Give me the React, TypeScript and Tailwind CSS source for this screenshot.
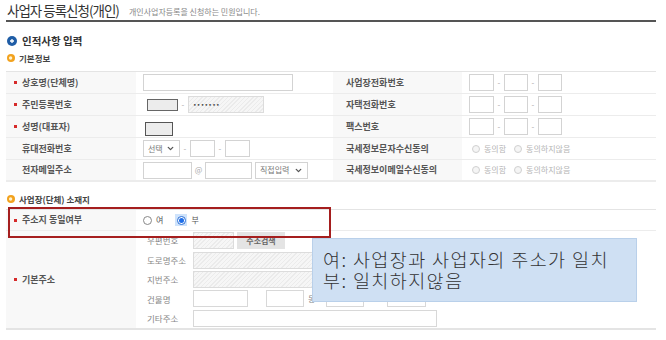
import { ReactNode } from 'react'
import { ChevronDown } from 'lucide-react'

const hatch =
  'bg-[repeating-linear-gradient(135deg,#ebebeb_0px,#ebebeb_1px,#f6f6f6_1px,#f6f6f6_3px)]'

function Lbl({ req, children }: { req?: boolean; children: ReactNode }) {
  return (
    <div className="flex h-full items-center pl-[8px] text-[9px] font-bold text-[#555]">
      <span className={req ? 'mr-[5px] h-[3px] w-[3px] bg-[#d62a2a]' : 'mr-[5px] w-[3px]'} />
      {children}
    </div>
  )
}

function Lbl2({ children }: { children: ReactNode }) {
  return <div className="flex h-full items-center pl-[13px] text-[9px] font-bold text-[#555]">{children}</div>
}

function Dash() {
  return <span className="w-[10px] text-center text-[8px] text-[#aaa]">-</span>
}

function Phone() {
  return (
    <div className="flex items-center">
      <div className="h-[17px] w-[25px] border border-[#d3d3d3] bg-white" />
      <Dash />
      <div className="h-[17px] w-[24px] border border-[#d3d3d3] bg-white" />
      <Dash />
      <div className="h-[17px] w-[24px] border border-[#d3d3d3] bg-white" />
    </div>
  )
}

function Radio({ on, dim }: { on?: boolean; dim?: boolean }) {
  if (on)
    return (
      <span className="flex h-[12px] w-[12px] items-center justify-center bg-[#cfe3fb]">
        <span className="flex h-[9px] w-[9px] items-center justify-center rounded-full border border-[#2a6fd6] bg-white">
          <span className="h-[5px] w-[5px] rounded-full bg-[#1e6ee8]" />
        </span>
      </span>
    )
  return (
    <span
      className={
        dim
          ? 'h-[8px] w-[8px] rounded-full border border-[#d0d0d0] bg-[#f5f5f5]'
          : 'h-[9px] w-[9px] rounded-full border border-[#888] bg-white'
      }
    />
  )
}

function Agree() {
  return (
    <div className="flex items-center pl-[10px] text-[8px] text-[#b5b5b5]">
      <Radio dim />
      <span className="ml-[4px]">동의함</span>
      <span className="ml-[8px]" />
      <Radio dim />
      <span className="ml-[4px]">동의하지않음</span>
    </div>
  )
}

function Select({ w, label }: { w: string; label: string }) {
  return (
    <div className={`flex h-[17px] items-center justify-between border border-[#d3d3d3] bg-white pl-[4px] pr-[4px] ${w}`}>
      <span className="text-[8px] text-[#777]">{label}</span>
      <ChevronDown size={9} strokeWidth={3.5} color="#555" />
    </div>
  )
}

function BlueIcon() {
  return (
    <svg width="10" height="10" viewBox="0 0 10 10">
      <circle cx="5" cy="5" r="5" fill="#1f5da6" />
      <path d="M3 5h4M5 3v4" stroke="#fff" strokeWidth="1.3" />
    </svg>
  )
}

function OrangeIcon() {
  return (
    <svg width="8" height="8" viewBox="0 0 8 8">
      <circle cx="4" cy="4" r="4" fill="#f2a21e" />
      <circle cx="3.6" cy="4" r="1.7" fill="#fff2cf" />
    </svg>
  )
}

function SubRow({ label, children }: { label: string; children?: ReactNode }) {
  return (
    <div className="flex h-[19.6px] items-center">
      <span className="w-[57px] pl-[11px] text-[8.5px] text-[#888]">{label}</span>
      {children}
    </div>
  )
}

export default function App() {
  return (
    <div className="relative h-[340px] w-[666px] overflow-hidden bg-white font-['Noto_Sans_CJK_KR',sans-serif]">
      <div className="ml-[6px] w-[650px]">
        <div className="flex h-[22px] items-end gap-[10px] border-b-2 border-[#555] pb-[3px] pl-[1px]">
          <span className="text-[13.5px] leading-[13px] tracking-[-1px] text-[#333]">사업자 등록신청(개인)</span>
          <span className="mb-[1px] text-[8px] leading-[8px] text-[#888]">개인사업자등록을 신청하는 민원입니다.</span>
        </div>

        <div className="mt-[13px] flex h-[12px] items-center gap-[5px] pl-[1px]">
          <BlueIcon />
          <span className="text-[10.5px] font-semibold text-[#333]">인적사항 입력</span>
        </div>
        <div className="mt-[5px] flex h-[12px] items-center gap-[4px] pl-[1px]">
          <OrangeIcon />
          <span className="text-[8.5px] font-bold text-[#444]">기본정보</span>
        </div>

        <div className="mt-[7px] border-t border-[#e4e4e4]">
          <div className="flex h-[22px] border-b border-[#ececec]">
            <div className="w-[130px] bg-[#f8f8f8]"><Lbl req>상호명(단체명)</Lbl></div>
            <div className="flex w-[197px] items-center pl-[7px]">
              <div className="h-[17px] w-[150px] border border-[#d3d3d3] bg-white" />
            </div>
            <div className="w-[129px] bg-[#f8f8f8]"><Lbl2>사업장전화번호</Lbl2></div>
            <div className="flex flex-1 items-center pl-[7px]"><Phone /></div>
          </div>
          <div className="flex h-[22px] border-b border-[#ececec]">
            <div className="w-[130px] bg-[#f8f8f8]"><Lbl req>주민등록번호</Lbl></div>
            <div className="flex w-[197px] items-center pl-[11px]">
              <div className="h-[12px] w-[31px] border border-[#666] bg-[#ececec]" />
              <Dash />
              <div className={`flex h-[17px] w-[76px] items-center border border-[#dcdcdc] pl-[4px] font-['DejaVu_Sans',sans-serif] text-[6px] tracking-[0.3px] text-[#444] ${hatch}`}>
                •••••••
              </div>
            </div>
            <div className="w-[129px] bg-[#f8f8f8]"><Lbl2>자택전화번호</Lbl2></div>
            <div className="flex flex-1 items-center pl-[7px]"><Phone /></div>
          </div>
          <div className="flex h-[22px] border-b border-[#ececec]">
            <div className="w-[130px] bg-[#f8f8f8]"><Lbl req>성명(대표자)</Lbl></div>
            <div className="flex w-[197px] items-center pl-[9px] pt-[4px]">
              <div className="h-[14px] w-[28px] border border-[#555] bg-[#ececec]" />
            </div>
            <div className="w-[129px] bg-[#f8f8f8]"><Lbl2>팩스번호</Lbl2></div>
            <div className="flex flex-1 items-center pl-[7px]"><Phone /></div>
          </div>
          <div className="flex h-[22px] border-b border-[#ececec]">
            <div className="w-[130px] bg-[#f8f8f8]"><Lbl>휴대전화번호</Lbl></div>
            <div className="flex w-[197px] items-center pl-[7px]">
              <Select w="w-[37px]" label="선택" />
              <Dash />
              <div className="h-[17px] w-[25px] border border-[#d3d3d3] bg-white" />
              <Dash />
              <div className="h-[17px] w-[25px] border border-[#d3d3d3] bg-white" />
            </div>
            <div className="w-[129px] bg-[#f8f8f8]"><Lbl2>국세정보문자수신동의</Lbl2></div>
            <div className="flex flex-1 items-center"><Agree /></div>
          </div>
          <div className="flex h-[22px] border-b-2 border-[#ececec]">
            <div className="w-[130px] bg-[#f8f8f8]"><Lbl>전자메일주소</Lbl></div>
            <div className="flex w-[197px] items-center pl-[7px]">
              <div className="h-[17px] w-[49px] border border-[#d3d3d3] bg-white" />
              <span className="w-[13px] text-center text-[8px] text-[#aaa]">@</span>
              <div className="h-[17px] w-[47px] border border-[#d3d3d3] bg-white" />
              <span className="w-[3px]" />
              <Select w="w-[53px]" label="직접입력" />
            </div>
            <div className="w-[129px] bg-[#f8f8f8]"><Lbl2>국세정보이메일수신동의</Lbl2></div>
            <div className="flex flex-1 items-center"><Agree /></div>
          </div>
        </div>

        <div className="mt-[11px] flex h-[12px] items-center gap-[4px] pl-[1px]">
          <OrangeIcon />
          <span className="text-[8.5px] font-bold text-[#444]">사업장(단체) 소재지</span>
        </div>

        <div className="mt-[4px] border-t border-[#e4e4e4]">
          <div className="flex h-[21px] border-b border-[#ececec]">
            <div className="w-[130px] bg-[#f8f8f8]"><Lbl req>주소지 동일여부</Lbl></div>
            <div className="flex flex-1 items-center gap-[4px] pl-[7px] text-[8px] text-[#555]">
              <Radio />
              <span className="mr-[8px]">여</span>
              <Radio on />
              <span>부</span>
            </div>
          </div>
          <div className="flex h-[99px] border-b-2 border-[#e4e4e4]">
            <div className="w-[130px] bg-[#f8f8f8]"><Lbl req>기본주소</Lbl></div>
            <div className="flex flex-1 flex-col">
              <SubRow label="우편번호">
                <div className={`h-[17px] w-[41px] border border-[#dcdcdc] ${hatch}`} />
                <div className="ml-[3px] flex h-[17px] w-[48px] items-center justify-center bg-[#e4e4e4] text-[8px] font-bold text-[#666]">
                  주소검색
                </div>
              </SubRow>
              <SubRow label="도로명주소">
                <div className={`h-[17px] w-[244px] border border-[#dcdcdc] ${hatch}`} />
              </SubRow>
              <SubRow label="지번주소">
                <div className={`h-[17px] w-[244px] border border-[#dcdcdc] ${hatch}`} />
              </SubRow>
              <SubRow label="건물명">
                <div className="h-[17px] w-[55px] border border-[#d8d8d8] bg-white" />
                <div className="ml-[18px] h-[17px] w-[38px] border border-[#d8d8d8] bg-white" />
                <span className="w-[22px] pl-[4px] text-[8px] text-[#888]">동</span>
                <div className="h-[17px] w-[38px] border border-[#d8d8d8] bg-white" />
                <span className="w-[23px]" />
                <div className="h-[17px] w-[39px] border border-[#d8d8d8] bg-white" />
              </SubRow>
              <SubRow label="기타주소">
                <div className="h-[17px] w-[244px] border border-[#d8d8d8] bg-white" />
              </SubRow>
            </div>
          </div>
        </div>
      </div>

      <div className="absolute left-[8px] top-[207px] h-[31px] w-[323px] border-2 border-[#a51e1e]" />

      <div className="absolute left-[312px] top-[238px] h-[64px] w-[325px] border border-[#b9d0ea] bg-[#cfe0f3] pl-[10px] pt-[10px] text-[18.5px] font-light leading-[21px] tracking-[1.4px] text-[#333]">
        <div>여: 사업장과 사업자의 주소가 일치</div>
        <div>부: 일치하지않음</div>
      </div>
    </div>
  )
}
